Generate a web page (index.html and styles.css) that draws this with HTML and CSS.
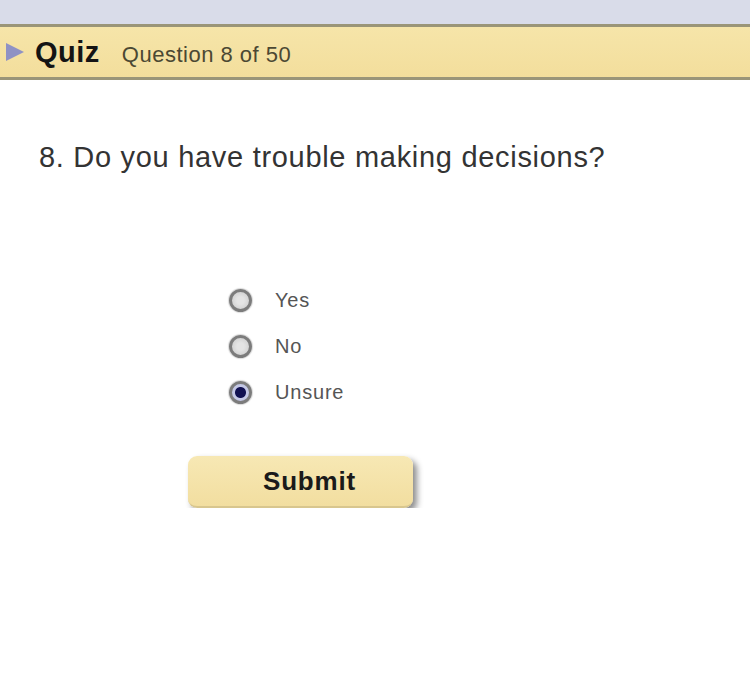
FILE: index.html
```html
<!DOCTYPE html>
<html lang="en">

<head>
    <meta charset="UTF-8">
    <meta name="viewport" content="width=device-width, initial-scale=1.0">
    <title>Quiz</title>
    <link rel="stylesheet" href="styles.css">
</head>

<body>
    <div class="top-band"></div>

    <div class="quiz-bar">
        <svg class="quiz-arrow" width="18" height="18" viewBox="0 0 18 18">
            <polygon points="0,0 18,9 0,18" fill="#8f92c4" />
        </svg>
        <span class="quiz-title">Quiz</span>
        <span class="quiz-progress">Question 8 of 50</span>
    </div>

    <div class="content">
        <h2 class="question">8. Do you have trouble making decisions?</h2>

        <form class="answers">
            <label class="answer">
                <input type="radio" name="answer" value="yes">
                <span>Yes</span>
            </label>
            <label class="answer">
                <input type="radio" name="answer" value="no">
                <span>No</span>
            </label>
            <label class="answer">
                <input type="radio" name="answer" value="unsure" checked>
                <span>Unsure</span>
            </label>

            <button type="button" class="submit-btn">Submit</button>
        </form>
    </div>
</body>

</html>
```

FILE: styles.css
```css
body {
    margin: 0;
    font-family: "Liberation Sans", Arial, sans-serif;
    background-color: #ffffff;
    color: #333;
}

/* lavender strip above the quiz header */
.top-band {
    height: 24px;
    background-color: #d9dce9;
}

.quiz-bar {
    display: flex;
    align-items: baseline;
    height: 50px;
    line-height: 50px;
    padding-left: 6px;
    background: linear-gradient(#f6e5a9, #f3de9c);
    border-top: 3px solid #9a9578;
    border-bottom: 3px solid #9a9578;
}

.quiz-arrow {
    align-self: center;
    margin-right: 11px;
}

.quiz-title {
    font-size: 29px;
    font-weight: bold;
    color: #141414;
    letter-spacing: 0.5px;
}

.quiz-progress {
    margin-left: 22px;
    font-size: 22px;
    color: #4b4833;
    letter-spacing: 0.5px;
}

.content {
    padding-left: 39px;
}

.question {
    margin: 61px 0 0 0;
    font-size: 29px;
    line-height: 32px;
    font-weight: normal;
    color: #333;
    letter-spacing: 0.7px;
}

.answers {
    display: flex;
    flex-direction: column;
    align-items: flex-start;
    margin-top: 104px;
    padding-left: 190px;
}

.answer {
    display: flex;
    align-items: center;
    height: 46px;
    font-size: 20px;
    color: #555;
    letter-spacing: 0.8px;
}

.answer input {
    appearance: none;
    -webkit-appearance: none;
    width: 23px;
    height: 23px;
    margin: 0 23px 0 0;
    border: 3px solid #7c7c7c;
    border-radius: 50%;
    box-sizing: border-box;
    background: radial-gradient(circle, #e4e4e4 30%, #c8c8c8 100%);
    box-shadow: 0 0 1px 1px #d8d8d8;
}

.answer input:checked {
    background: radial-gradient(circle, #101052 0, #101052 5px, #c4c8e6 6px, #c4c8e6 100%);
}

.submit-btn {
    margin-top: 41px;
    margin-left: -41px;
    width: 225px;
    height: 52px;
    padding: 0 0 0 18px;
    font-family: "Liberation Sans", Arial, sans-serif;
    font-size: 26px;
    font-weight: bold;
    letter-spacing: 0.8px;
    color: #1a1a1a;
    background: linear-gradient(#f7e8b4, #f2dea0);
    border: none;
    border-bottom: 2px solid #d8c68e;
    border-radius: 9px;
    box-shadow: 4px 4px 6px rgba(0, 0, 0, 0.45);
}
```
